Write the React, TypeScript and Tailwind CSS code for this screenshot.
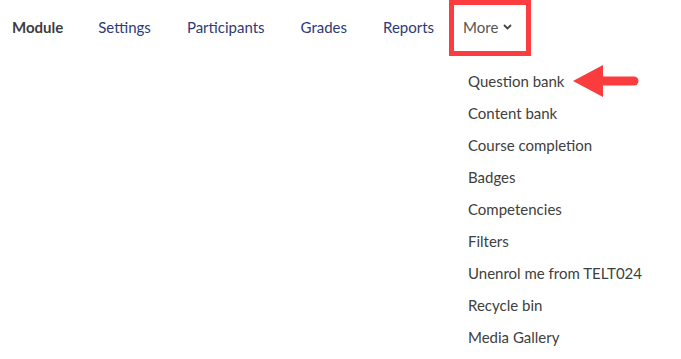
const tabs = ["Settings", "Participants", "Grades", "Reports"];

const menuItems = [
  "Question bank",
  "Content bank",
  "Course completion",
  "Badges",
  "Competencies",
  "Filters",
  "Unenrol me from TELT024",
  "Recycle bin",
  "Media Gallery",
];

function Arrow() {
  return (
    <svg width="68" height="34" viewBox="0 0 68 34" className="absolute left-[572px] top-[64px]">
      <polygon points="1,17 31,1 31,33" fill="#fb3c3f" />
      <line x1="28" y1="17" x2="62" y2="17" stroke="#fb3c3f" strokeWidth="9" strokeLinecap="round" />
    </svg>
  );
}

export default function App() {
  return (
    <div className="relative w-[681px] h-[359px] bg-white font-['Lato',sans-serif] text-[15px] overflow-hidden">
      <nav className="flex items-start h-[56px]">
        <span className="pl-[12px] pr-[17px] pt-[16px] font-bold text-[#3d3d3d]">Module</span>
        {tabs.map((t) => (
          <span key={t} className="px-[18px] pt-[16px] text-[#2e3a78]">
            {t}
          </span>
        ))}
        <div className="ml-[-3px] w-[82px] h-[56px] border-[5px] border-[#fc3d3f] flex items-start pl-[9px] pt-[11px] text-[#555]">
          <span>More</span>
          <svg width="9" height="6" viewBox="0 0 9 6" className="ml-[5px] mt-[8px]">
            <path d="M1 1 L4.5 4.5 L8 1" fill="none" stroke="#444" strokeWidth="1.8" />
          </svg>
        </div>
      </nav>
      <ul className="flex flex-col pl-[468px] pt-[14px] text-[#404040]">
        {menuItems.map((m) => (
          <li key={m} className="h-[32px] leading-[22px]">
            {m}
          </li>
        ))}
      </ul>
      <Arrow />
    </div>
  );
}
